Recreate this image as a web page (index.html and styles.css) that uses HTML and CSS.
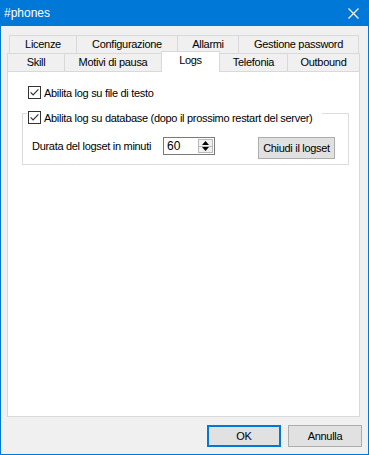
FILE: index.html
```html
<!DOCTYPE html>
<html lang="it">
<head>
<meta charset="utf-8">
<title>#phones</title>
<link rel="stylesheet" href="styles.css">
</head>
<body>
<div class="window">
  <div class="titlebar">
    <span class="title">#phones</span>
    <svg class="close" width="11" height="11" viewBox="0 0 11 11"><path d="M0.5 0.5 L10.5 10.5 M10.5 0.5 L0.5 10.5" stroke="#fff" stroke-width="1.1" fill="none"/></svg>
  </div>
  <div class="client">
    <div class="tabcontrol">
      <div class="tabrow row1">
        <div class="tab t-lic">Licenze</div>
        <div class="tab t-conf">Configurazione</div>
        <div class="tab t-all">Allarmi</div>
        <div class="tab t-gest last">Gestione password</div>
      </div>
      <div class="tabrow row2">
        <div class="tab t-skill">Skill</div>
        <div class="tab t-mot">Motivi di pausa</div>
        <div class="tab t-logs selected">Logs</div>
        <div class="tab t-tel">Telefonia</div>
        <div class="tab t-out last">Outbound</div>
      </div>
      <div class="panel">
        <label class="check first">
          <span class="box"><svg width="13" height="13" viewBox="0 0 13 13"><rect x="0.5" y="0.5" width="12" height="12" fill="#fff" stroke="#333"/><path d="M2.6 6.4 L5.1 9 L10.4 3.4" stroke="#333" stroke-width="1.2" fill="none"/></svg></span>
          <span>Abilita log su file di testo</span>
        </label>
        <div class="group">
          <label class="check legend">
            <span class="box"><svg width="13" height="13" viewBox="0 0 13 13"><rect x="0.5" y="0.5" width="12" height="12" fill="#fff" stroke="#333"/><path d="M2.6 6.4 L5.1 9 L10.4 3.4" stroke="#333" stroke-width="1.2" fill="none"/></svg></span>
            <span>Abilita log su database (dopo il prossimo restart del server)</span>
          </label>
          <div class="group-row">
            <span class="field-label">Durata del logset in minuti</span>
            <div class="spin">
              <span class="spin-val">60</span>
              <div class="spin-btns">
                <span class="spin-btn"><svg width="7" height="4" viewBox="0 0 7 4"><path d="M3.5 0 L7 4 L0 4 Z" fill="#000"/></svg></span>
                <span class="spin-btn"><svg width="7" height="4" viewBox="0 0 7 4"><path d="M0 0 L7 0 L3.5 4 Z" fill="#000"/></svg></span>
              </div>
            </div>
            <button class="btn btn-close-log">Chiudi il logset</button>
          </div>
        </div>
      </div>
    </div>
    <div class="footer">
      <button class="btn btn-default">OK</button>
      <button class="btn">Annulla</button>
    </div>
  </div>
</div>
</body>
</html>
```

FILE: styles.css
```css
* { box-sizing: border-box; }
html, body { margin: 0; padding: 0; }
body {
  font-family: "Liberation Sans", Arial, sans-serif;
  font-size: 11px;
  letter-spacing: -0.3px;
  color: #000;
  background: #f0f0f0;
}
.window {
  width: 369px;
  height: 455px;
  border: 1px solid #0078d7;
  border-top: 0;
  background: #f0f0f0;
  display: flex;
  flex-direction: column;
}
.titlebar {
  height: 26px;
  flex: none;
  background: #0078d7;
  color: #fff;
  display: flex;
  align-items: center;
  justify-content: space-between;
  padding: 0 9px 0 3px;
}
.title {
  font-size: 12px;
  line-height: 16px;
  letter-spacing: 0;
}
.close { display: block; }
.client {
  flex: 1;
  display: flex;
  flex-direction: column;
  padding: 9px 0 7px 6px;
}
.tabcontrol {
  width: 353px;
  display: flex;
  flex-direction: column;
}
.tabrow {
  display: flex;
  height: 18px;
  align-items: flex-end;
}
.row1 { margin-left: 2px; }
.tab {
  height: 18px;
  border-top: 1px solid #d9d9d9;
  border-left: 1px solid #d9d9d9;
  background: #f0f0f0;
  text-align: center;
  line-height: 17px;
  white-space: nowrap;
}
.tab.last { border-right: 1px solid #d9d9d9; }
.t-lic { width: 67px; }
.t-conf { width: 101px; }
.t-all { width: 61px; }
.t-gest { width: 121px; }
.t-skill { width: 57px; }
.t-mot { width: 97px; }
.t-logs { width: 59px; }
.t-tel { width: 67px; border-left: 0; }
.t-out { width: 73px; }
.tab.selected {
  height: 21px;
  margin-bottom: -1px;
  background: #fff;
  border-right: 1px solid #d9d9d9;
  position: relative;
  z-index: 1;
  line-height: 16px;
}
.panel {
  height: 346px;
  border: 1px solid #d9d9d9;
  background: #fff;
  padding-top: 14px;
}
.check {
  display: flex;
  align-items: center;
  height: 13px;
  white-space: nowrap;
}
.check .box {
  width: 13px;
  height: 13px;
  margin-right: 3px;
  flex: none;
}
.check .box svg { display: block; }
.check.first { margin-left: 20px; }
.group {
  margin: 14px 10px 0 14px;
  height: 52px;
  border: 1px solid #dcdcdc;
}
.check.legend {
  display: inline-flex;
  margin: -9px 0 0 4px;
  padding: 0 10px 0 1px;
  background: #fff;
}
.group-row {
  display: flex;
  align-items: flex-start;
  margin-top: 11px;
  padding-left: 9px;
}
.field-label {
  width: 131px;
  height: 18px;
  line-height: 18px;
}
.spin {
  width: 52px;
  height: 18px;
  border: 1px solid #7a7a7a;
  display: flex;
  justify-content: space-between;
  padding: 1px 1px 1px 3px;
}
.spin-val {
  font-size: 12px;
  line-height: 15px;
  letter-spacing: 0;
}
.spin-btns {
  width: 15px;
  display: flex;
  flex-direction: column;
}
.spin-btn {
  flex: 1;
  border: 1px solid #b9b9b9;
  background: #f0f0f0;
  display: flex;
  align-items: center;
  justify-content: center;
}
.spin-btn + .spin-btn { border-top: 0; }
.spin-btn svg { display: block; }
.btn {
  font-family: "Liberation Sans", Arial, sans-serif;
  font-size: 11px;
  letter-spacing: -0.3px;
  color: #000;
  background: #e1e1e1;
  border: 1px solid #adadad;
  padding: 0;
  margin: 0;
  height: 22px;
  width: 74px;
}
.btn-close-log {
  width: 77px;
  margin-left: 43px;
}
.footer {
  display: flex;
  justify-content: flex-end;
  gap: 7px;
  margin-top: 8px;
  padding-right: 6px;
}
.btn-default {
  border: 2px solid #0078d7;
}
```
